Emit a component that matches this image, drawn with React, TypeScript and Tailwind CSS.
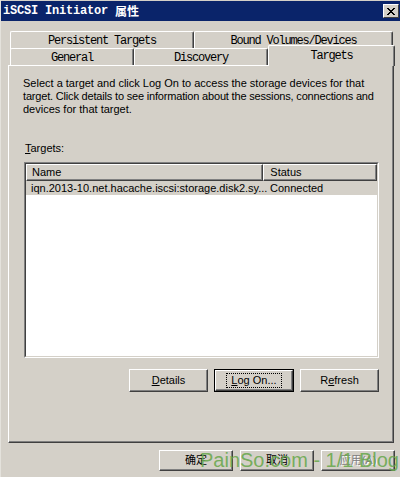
import React from "react";

const sans = { fontFamily: '"Liberation Sans", "Noto Sans CJK SC", sans-serif' };

function Tab({ label, w, h, selected }: { label: string; w: number; h: number; selected?: boolean }) {
  return (
    <div
      className={
        "flex justify-center bg-[#d4d0c8] border-t border-l border-white rounded-t-[2px] border-r border-r-[#404040] shadow-[inset_-1px_0_0_#808080] text-[12px] tracking-[-1.2px] text-black " +
        (selected ? "relative z-10 -mb-px pt-[4px]" : "pt-[3px]")
      }
      style={{ width: w, height: h, fontFamily: '"Liberation Mono", monospace' }}
    >
      <span className="leading-[12px]">{label}</span>
    </div>
  );
}

function Btn({ children, w, h, def, disabled }: { children: React.ReactNode; w: number; h: number; def?: boolean; disabled?: boolean }) {
  return (
    <div
      className={
        "flex items-center justify-center bg-[#d4d0c8] text-[11px] " +
        (def ? "border border-black" : "") +
        (disabled ? " text-[#808080] [text-shadow:1px_1px_0_#fff]" : " text-black")
      }
      style={{ width: w, height: h }}
    >
      <div className="w-full h-full flex items-center justify-center border-t border-l border-white border-r border-b border-r-[#404040] border-b-[#404040] shadow-[inset_-1px_-1px_0_#808080]">
        {def ? (
          <div className="px-[4px] border border-dotted border-black leading-[13px]">{children}</div>
        ) : (
          children
        )}
      </div>
    </div>
  );
}

export default function App() {
  return (
    <div className="relative w-[400px] h-[477px] bg-[#d4d0c8] overflow-hidden border-l border-[#e4e2dc]" style={sans}>
      {/* title bar */}
      <div className="mt-px h-[20px] bg-[#0a246a] flex items-center pl-[2px] pr-[1px]">
        <span className="text-white font-bold text-[12px] tracking-[-0.2px]" style={{ fontFamily: '"Liberation Mono", monospace' }}>
          iSCSI Initiator
        </span>
        <span className="ml-[7px] text-white font-bold text-[12px]" style={{ fontFamily: '"Noto Sans CJK SC", sans-serif' }}>
          属性
        </span>
        <div className="ml-auto w-[16px] h-[14px] bg-[#d4d0c8] border-t border-l border-white border-r border-b border-r-[#404040] border-b-[#404040] flex items-center justify-center">
          <svg width="8" height="7" viewBox="0 0 8 7">
            <path d="M0 0 L7 7 M1 0 L8 7 M7 0 L0 7 M8 0 L1 7" stroke="#000" strokeWidth="1" shapeRendering="crispEdges" />
          </svg>
        </div>
      </div>

      {/* tabs and panel */}
      <div className="pl-[7px] mt-[10px]">
        <div className="flex pl-[2px] h-[16px]">
          <Tab label="Persistent Targets" w={184} h={18} />
          <Tab label="Bound Volumes/Devices" w={199} h={18} />
        </div>
        <div className="relative flex items-end pl-[2px] h-[18px]">
          <Tab label="General" w={124} h={17} />
          <Tab label="Discovery" w={134} h={17} />
          <Tab label="Targets" w={127} h={21} selected />
        </div>
        <div className="w-[386px] h-[378px] border-t border-l border-white border-r border-b border-r-[#404040] border-b-[#404040] shadow-[inset_-1px_-1px_0_#808080] pt-[11px] text-[11px] text-black">
          <div className="pl-[14px] leading-[13px] whitespace-nowrap">
            <div>Select a target and click Log On to access the storage devices for that</div>
            <div className="tracking-[-0.18px]">target. Click details to see information about the sessions, connections and</div>
            <div>devices for that target.</div>
          </div>
          <div className="mt-[26px] pl-[16px] leading-[13px]">
            <span className="underline">T</span>argets:
          </div>
          <div className="mt-[7px] ml-[15px] w-[355px] h-[196px] border-t border-l border-[#808080] border-r border-b border-r-white border-b-white">
            <div className="w-full h-full bg-white border-t border-l border-[#404040] border-r border-b border-r-[#d4d0c8] border-b-[#d4d0c8]">
              <div className="flex h-[17px]">
                <div className="w-[238px] pl-[5px] flex items-center bg-[#d4d0c8] border-t border-l border-white border-r border-b border-r-[#404040] border-b-[#404040] shadow-[inset_-1px_-1px_0_#808080]">
                  Name
                </div>
                <div className="w-[114px] pl-[6px] flex items-center bg-[#d4d0c8] border-t border-l border-white border-r border-b border-r-[#404040] border-b-[#404040] shadow-[inset_-1px_-1px_0_#808080]">
                  Status
                </div>
              </div>
              <div className="flex h-[14px] items-center bg-[#d4d0c8] whitespace-nowrap">
                <div className="w-[239px] pl-[5px]">iqn.2013-10.net.hacache.iscsi:storage.disk2.sy...</div>
                <div className="pl-[5px]">Connected</div>
              </div>
            </div>
          </div>
          <div className="mt-[11px] ml-[15px] w-[355px] flex justify-end gap-[6px]">
            <Btn w={79} h={23}>
              <span><span className="underline">D</span>etails</span>
            </Btn>
            <Btn w={80} h={23} def>
              <span><span className="underline">L</span>og On...</span>
            </Btn>
            <Btn w={79} h={23}>
              <span>R<span className="underline">e</span>fresh</span>
            </Btn>
          </div>
        </div>
      </div>

      {/* bottom buttons */}
      <div className="mt-[7px] pr-[5px] flex justify-end gap-[7px]">
        <Btn w={74} h={21}>确定</Btn>
        <Btn w={74} h={21}>取消</Btn>
        <Btn w={74} h={21} disabled>应用(A)</Btn>
      </div>

      {/* watermark */}
      <div className="absolute left-[199px] top-[449px] text-[20px] leading-[22px] text-[#6aa84f]/90 whitespace-nowrap" style={{ fontFamily: '"Liberation Sans", sans-serif' }}>
        PainSo.com - 1/1 Blog
      </div>
    </div>
  );
}
